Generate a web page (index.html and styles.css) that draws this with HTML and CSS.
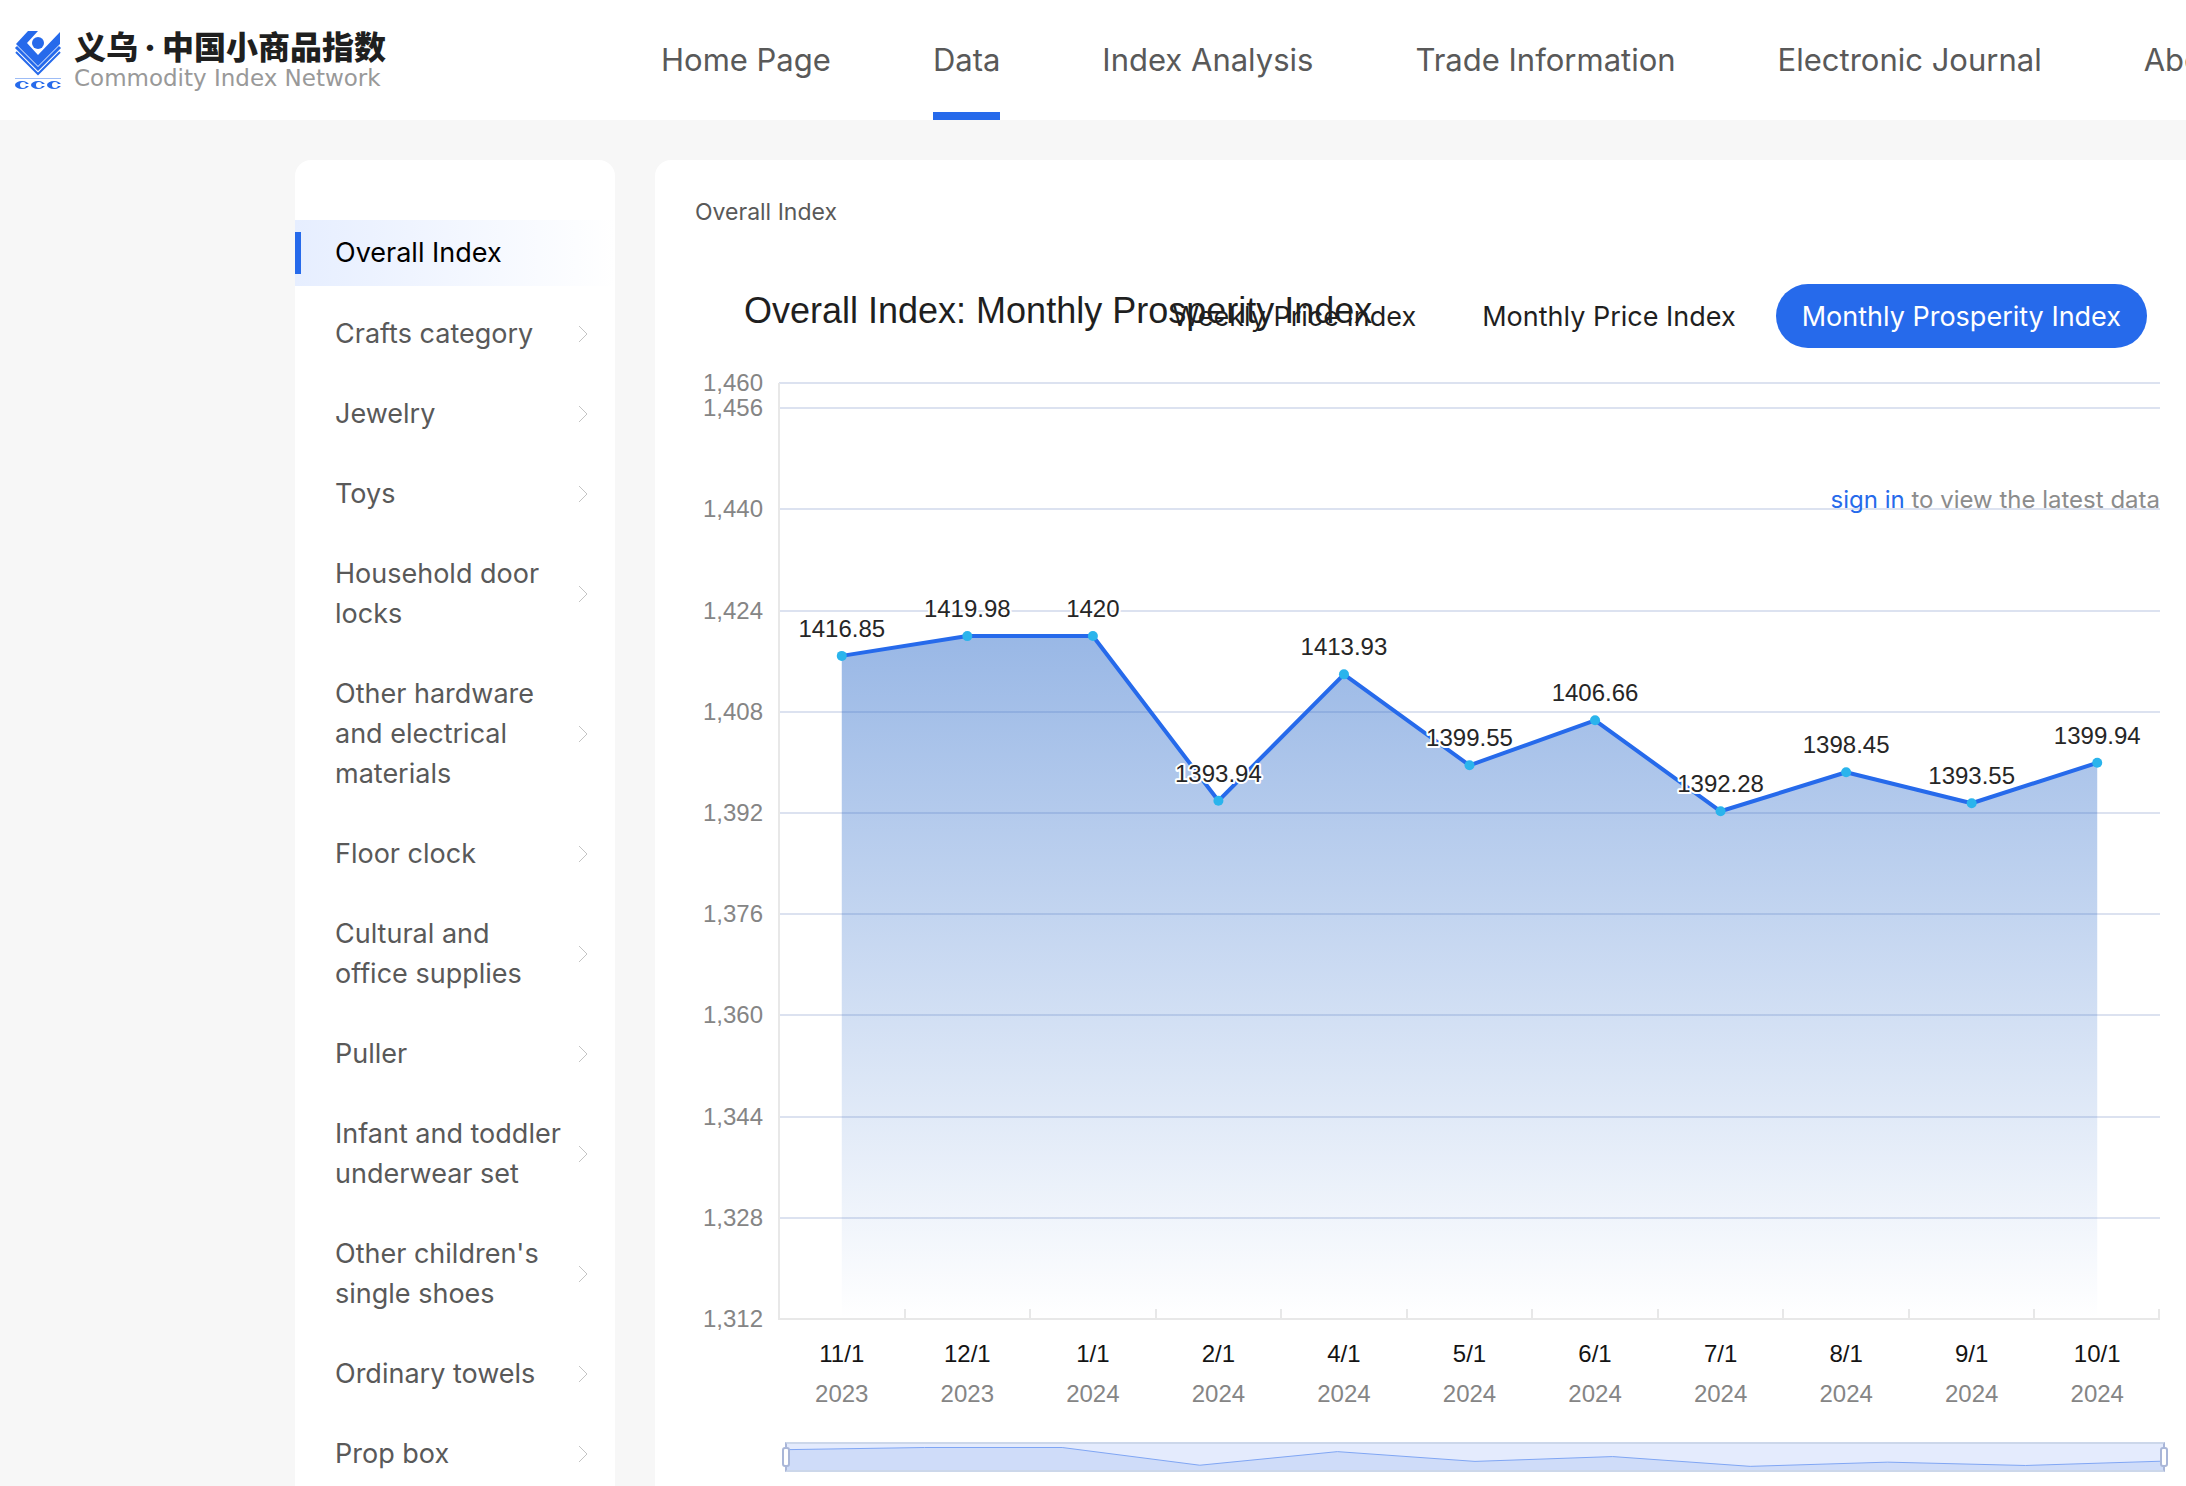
FILE: index.html
```html
<!DOCTYPE html>
<html lang="en">
<head>
<meta charset="utf-8">
<meta name="viewport" content="width=device-width, initial-scale=1">
<title>Overall Index - Commodity Index Network</title>
<link rel="stylesheet" href="styles.css">
</head>
<body>
<header class="header">
  <a class="brand" href="#">
    <svg class="brand-mark" viewBox="0 0 48 60" aria-hidden="true">
      <path fill="#266aeb" d="M2 14 L14 1 H24 L13 13 L24 25 L46 2 V14 L24 36 Z"/>
      <circle cx="24" cy="13" r="6" fill="#266aeb"/>
      <path fill="none" stroke="#266aeb" stroke-width="3" d="M2 17 L24 39 L46 17"/>
      <path fill="none" stroke="#266aeb" stroke-width="2" d="M2 22 L24 44 L46 22"/>
      <path fill="#9dbcf6" d="M1 48h46v1H1z"/>
      <g fill="#266aeb"><ellipse cx="8" cy="55" rx="7" ry="4"/><ellipse cx="24" cy="55" rx="7" ry="4"/><ellipse cx="40" cy="55" rx="7" ry="4"/></g>
      <g fill="#fff"><circle cx="9" cy="55" r="3"/><circle cx="25" cy="55" r="3"/><circle cx="41" cy="55" r="3"/><path d="M12 54h3v2h-3zM28 54h3v2h-3zM44 54h3v2h-3z"/></g>
    </svg>
    <span class="brand-text">
      <span class="brand-cn" lang="zh">义乌<span class="brand-dot">·</span>中国小商品指数</span>
      <span class="brand-en">Commodity Index Network</span>
    </span>
  </a>
  <nav class="nav">
    <a href="#">Home Page</a>
    <a href="#" class="is-active" aria-current="page">Data</a>
    <a href="#">Index Analysis</a>
    <a href="#">Trade Information</a>
    <a href="#">Electronic Journal</a>
    <a href="#">About Us</a>
  </nav>
</header>

<div class="content">
  <nav class="sidebar" aria-label="Categories">
    <a class="item is-current" href="#">Overall Index</a>
    <a class="item" href="#"><span>Crafts category</span><svg class="chev" viewBox="0 0 10 18"><path d="M1 1l8 8-8 8"/></svg></a>
    <a class="item" href="#"><span>Jewelry</span><svg class="chev" viewBox="0 0 10 18"><path d="M1 1l8 8-8 8"/></svg></a>
    <a class="item" href="#"><span>Toys</span><svg class="chev" viewBox="0 0 10 18"><path d="M1 1l8 8-8 8"/></svg></a>
    <a class="item" href="#"><span>Household door locks</span><svg class="chev" viewBox="0 0 10 18"><path d="M1 1l8 8-8 8"/></svg></a>
    <a class="item" href="#"><span>Other hardware and electrical materials</span><svg class="chev" viewBox="0 0 10 18"><path d="M1 1l8 8-8 8"/></svg></a>
    <a class="item" href="#"><span>Floor clock</span><svg class="chev" viewBox="0 0 10 18"><path d="M1 1l8 8-8 8"/></svg></a>
    <a class="item" href="#"><span>Cultural and office supplies</span><svg class="chev" viewBox="0 0 10 18"><path d="M1 1l8 8-8 8"/></svg></a>
    <a class="item" href="#"><span>Puller</span><svg class="chev" viewBox="0 0 10 18"><path d="M1 1l8 8-8 8"/></svg></a>
    <a class="item" href="#"><span>Infant and toddler underwear set</span><svg class="chev" viewBox="0 0 10 18"><path d="M1 1l8 8-8 8"/></svg></a>
    <a class="item" href="#"><span>Other children's single shoes</span><svg class="chev" viewBox="0 0 10 18"><path d="M1 1l8 8-8 8"/></svg></a>
    <a class="item" href="#"><span>Ordinary towels</span><svg class="chev" viewBox="0 0 10 18"><path d="M1 1l8 8-8 8"/></svg></a>
    <a class="item" href="#"><span>Prop box</span><svg class="chev" viewBox="0 0 10 18"><path d="M1 1l8 8-8 8"/></svg></a>
  </nav>

  <main class="panel">
    <p class="breadcrumb">Overall Index</p>
    <section class="chart-box">
      <h1 class="chart-title">Overall Index: Monthly Prosperity Index</h1>
      <div class="tabs">
        <button type="button" class="tab">Weekly Price Index</button>
        <button type="button" class="tab">Monthly Price Index</button>
        <button type="button" class="tab is-selected" aria-pressed="true">Monthly Prosperity Index</button>
      </div>
      <svg class="chart" id="chart" role="img" aria-label="Monthly Prosperity Index"></svg>
      <p class="login-tip"><a href="#">sign in</a> to view the latest data</p>
      <div class="zoom">
        <svg class="zoom-preview" id="preview" viewBox="0 0 1000 26" preserveAspectRatio="none" aria-hidden="true"></svg>
        <input type="range" min="0" max="100" value="0" aria-label="Range start">
        <input type="range" min="0" max="100" value="100" aria-label="Range end">
      </div>
    </section>
  </main>
</div>
<script src="chart.js"></script>
</body>
</html>
```
FILE: styles.css
```css
* { box-sizing: border-box; }

body {
  margin: 0;
  height: 100vh;
  overflow: hidden;
  background: #f7f7f7;
  color: #1f1f1f;
  font-family: Inter, "Liberation Sans", "Noto Sans CJK SC", sans-serif;
}

a { color: inherit; text-decoration: none; }

.header {
  display: flex;
  height: 120px;
  background: #fff;
  overflow: hidden;
}

.brand {
  display: flex;
  flex: 0 0 661px;
  align-items: flex-start;
  gap: 12px;
  padding: 30px 0 0 14px;
}

.brand-mark { width: 48px; height: 60px; }

.brand-text { display: flex; flex-direction: column; white-space: nowrap; }

.brand-cn {
  font: 900 32px/30px "Noto Sans CJK SC", sans-serif;
}

.brand-dot {
  display: inline-block;
  width: 24px;
  font-family: Inter, sans-serif;
  line-height: 24px;
  text-align: center;
}

.brand-en {
  font: 400 23px/36px "DejaVu Sans", sans-serif;
  color: #999;
}

.nav { display: flex; gap: 102px; }

.nav a {
  font-size: 31px;
  line-height: 120px;
  color: #595959;
  white-space: nowrap;
}

.nav .is-active { box-shadow: inset 0 -8px #266aeb; }

.content {
  display: flex;
  align-items: stretch;
  gap: 40px;
  padding: 40px 0 0 295px;
}

.sidebar {
  flex: 0 0 320px;
  padding: 60px 0 40px;
  border-radius: 16px;
  background: #fff;
}

.item {
  display: flex;
  align-items: center;
  justify-content: space-between;
  padding: 20px 27px 20px 40px;
  color: #595959;
  font-size: 27px;
  line-height: 40px;
}

.item span { width: 230px; }

.item.is-current {
  height: 66px;
  margin-bottom: 8px;
  padding: 0 40px 0 34px;
  color: #000;
  background: linear-gradient(90deg, #e6eeff, #fff);
  justify-content: flex-start;
  gap: 34px;
}

.item.is-current::before {
  content: "";
  width: 6px;
  height: 42px;
  margin-left: -34px;
  background: #266aeb;
}

.chev { flex: none; width: 10px; height: 18px; fill: none; stroke: #c4c4c4; }

.panel {
  flex: 1;
  min-width: 0;
  padding: 30px 18px 0 40px;
  border-radius: 16px 0 0 0;
  background: #fff;
}

.breadcrumb {
  margin: 0 0 50px;
  font-size: 23px;
  line-height: 44px;
  color: #595959;
}

.chart-box { position: relative; }

.chart-title {
  position: absolute;
  left: 49px;
  top: 0;
  margin: 0;
  font: 400 36px/54px "Liberation Sans", sans-serif;
  white-space: nowrap;
}

.tabs {
  display: flex;
  justify-content: flex-end;
  gap: 14px;
  padding-right: 21px;
}

.tab {
  position: relative;
  height: 64px;
  padding: 0 26px;
  border: 0;
  border-radius: 32px;
  background: none;
  color: #1f1f1f;
  font: inherit;
  font-size: 27px;
  white-space: nowrap;
}

.tab.is-selected { background: #266aeb; color: #fff; }

.chart {
  display: block;
  width: 100%;
  height: 1094px;
  font: 24px "Liberation Sans", sans-serif;
}

.grid { stroke: #dce2f0; stroke-width: 2; }
.axis { fill: none; stroke: #e8e8e8; stroke-width: 2; }
.muted { fill: #858585; }
.month { fill: #141414; }
.line { fill: none; stroke: #266aeb; stroke-width: 4; stroke-linejoin: bevel; }
.dot { fill: #2ab4ec; }
.value { fill: #262626; stroke: #fff; stroke-width: 4; paint-order: stroke; stroke-linejoin: round; }

.login-tip {
  position: absolute;
  right: 8px;
  top: 200px;
  margin: 0;
  font-size: 24px;
  line-height: 32px;
  color: #8c8c8c;
}

.login-tip a { color: #266aeb; }

.zoom {
  position: relative;
  height: 30px;
  margin: 0 3px 0 90px;
  border: 2px solid #ccd7ea;
  border-left-color: #a9b6d8;
  border-right-color: #a9b6d8;
  background: #e4ebfd;
}

.zoom-preview { display: block; width: 100%; height: 26px; }
.preview-area { fill: #cfdcf9; }
.preview-line { fill: none; stroke: #80a6f4; stroke-width: 1; vector-effect: non-scaling-stroke; }

.zoom input {
  position: absolute;
  left: -5px;
  top: 3px;
  width: calc(100% + 10px);
  height: 20px;
  margin: 0;
  appearance: none;
  background: none;
  pointer-events: none;
}

.zoom input::-webkit-slider-thumb {
  appearance: none;
  width: 8px;
  height: 20px;
  border: 2px solid #a9b6d8;
  border-radius: 3px;
  background: #fff;
  pointer-events: auto;
}
```
FILE: chart.js
```js
const points = [
  ["11/1", 2023, 1416.85], ["12/1", 2023, 1419.98], ["1/1", 2024, 1420],
  ["2/1", 2024, 1393.94], ["4/1", 2024, 1413.93], ["5/1", 2024, 1399.55],
  ["6/1", 2024, 1406.66], ["7/1", 2024, 1392.28], ["8/1", 2024, 1398.45],
  ["9/1", 2024, 1393.55], ["10/1", 2024, 1399.94]
];
const ticks = [1460, 1456, 1440, 1424, 1408, 1392, 1376, 1360, 1344, 1328, 1312];
const TOP = 35, BOTTOM = 971, LEFT = 84;
const yOf = v => BOTTOM - (v - 1312) / 148 * (BOTTOM - TOP);

function draw() {
  const svg = document.getElementById("chart");
  const right = svg.clientWidth - 8;
  const step = (right - LEFT) / points.length;
  const xOf = i => LEFT + step * (i + 0.5);
  const path = points.map((p, i) => `${xOf(i)},${yOf(p[2])}`).join(" ");
  let out = `<defs><linearGradient id="fade" x1="0" y1="0" x2="0" y2="1">
    <stop offset="0" stop-color="#2667c9" stop-opacity=".47"/>
    <stop offset="1" stop-color="#2667c9" stop-opacity="0"/></linearGradient></defs>`;
  for (const t of ticks) {
    const y = Math.round(yOf(t));
    if (t > 1312) out += `<path class="grid" d="M${LEFT} ${y}H${right}"/>`;
    out += `<text class="muted" x="${LEFT - 16}" y="${y + 8}" text-anchor="end">${t.toLocaleString("en-US")}</text>`;
  }
  out += `<path class="axis" d="M${LEFT} ${TOP}V${BOTTOM}H${right}"/>`;
  points.forEach((p, i) => {
    const x = Math.round(LEFT + step * (i + 1)) - (i === points.length - 1 ? 1 : 0);
    out += `<path class="axis" d="M${x} ${BOTTOM - 10}V${BOTTOM}"/>`;
    out += `<text class="month" x="${xOf(i)}" y="1014" text-anchor="middle">${p[0]}</text>`;
    out += `<text class="muted" x="${xOf(i)}" y="1054" text-anchor="middle">${p[1]}</text>`;
  });
  out += `<polygon fill="url(#fade)" points="${path} ${xOf(points.length - 1)},${BOTTOM} ${xOf(0)},${BOTTOM}"/>`;
  out += `<polyline class="line" points="${path}"/>`;
  points.forEach((p, i) => { out += `<circle class="dot" cx="${xOf(i)}" cy="${yOf(p[2])}" r="5"/>`; });
  points.forEach((p, i) => {
    out += `<text class="value" x="${xOf(i)}" y="${yOf(p[2]) - 19}" text-anchor="middle">${p[2]}</text>`;
  });
  svg.innerHTML = out;
}

const mini = points.map((p, i) => `${i * 100},${3.5 + (1420 - p[2]) * 0.68}`).join(" ");
document.getElementById("preview").innerHTML =
  `<polygon class="preview-area" points="${mini} 1000,26 0,26"/><polyline class="preview-line" points="${mini}"/>`;

draw();
window.addEventListener("resize", draw);
```
